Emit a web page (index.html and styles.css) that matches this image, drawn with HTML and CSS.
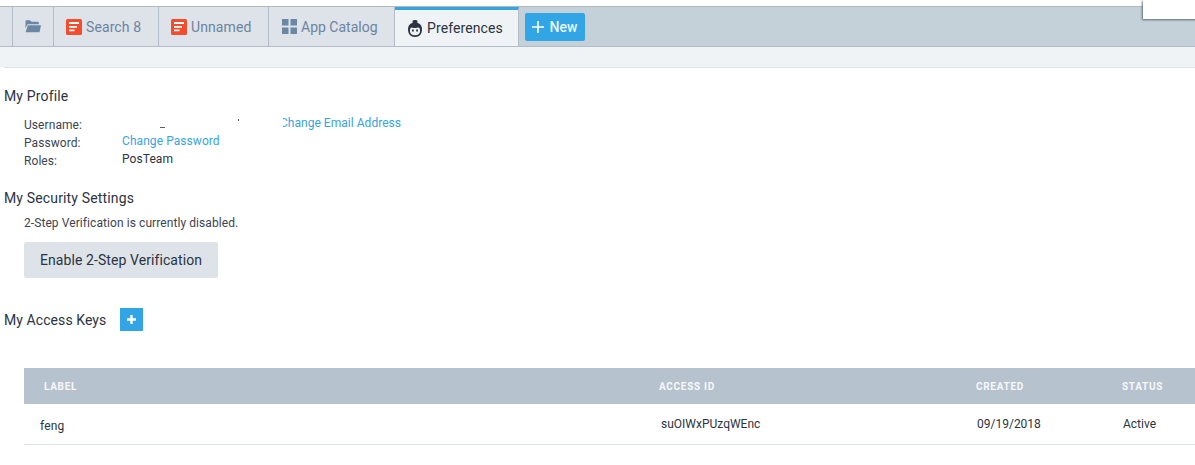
FILE: index.html
```html
<!DOCTYPE html>
<html lang="en">
<head>
<meta charset="utf-8">
<title>Preferences</title>
<link rel="stylesheet" href="styles.css">
</head>
<body>
<div class="popover"></div>
<nav class="tabbar">
  <div class="tab tab-stub"></div>
  <div class="tab tab-folder">
    <svg width="16" height="13" viewBox="0 0 16 13"><path fill="#6b87a3" d="M.5 1.500C.5.800 1 .3 1.700.3h3.300l1.500 1.500h6.300c.6 0 1 .4 1 1v1.400H2.500L.5 8z"/><path fill="#6b87a3" d="M2.800 5.300H16l-1.500 7H.6z"/></svg>
  </div>
  <div class="tab tab-search">
    <svg class="doc" width="16" height="16" viewBox="0 0 16 16"><rect width="16" height="16" rx="1.500" fill="#f44d2e"/><path fill="#fff" d="M3 3h10v2H3zM3 7h8v1.700H3zM3 10.500h5.500v1.700H3z"/></svg>
    <span>Search 8</span>
  </div>
  <div class="tab tab-unnamed">
    <svg class="doc" width="16" height="16" viewBox="0 0 16 16"><rect width="16" height="16" rx="1.500" fill="#f44d2e"/><path fill="#fff" d="M3 3h10v2H3zM3 7h8v1.700H3zM3 10.500h5.500v1.700H3z"/></svg>
    <span>Unnamed</span>
  </div>
  <div class="tab tab-catalog">
    <svg width="15" height="15" viewBox="0 0 15 15"><path fill="#6b87a3" d="M0 0h6.500v6.500H0zM8.500 0H15v6.500H8.500zM0 8.500h6.500V15H0zM8.500 8.500H15V15H8.500z"/></svg>
    <span>App Catalog</span>
  </div>
  <div class="tab tab-active">
    <svg width="14" height="17" viewBox="0 0 14 17"><rect x="4.500" y="0" width="5" height="3.500" rx="1.500" fill="#2b3440"/><path fill="#2b3440" d="M7 2.500c4 0 7 2.600 7 7S11.500 17 7 17 0 14 0 9.500 3 2.500 7 2.500z"/><path fill="#f0f3f5" d="M3.200 7.500c1.500.6 6.100.6 7.600 0 .7.500 1.200 1.200 1.200 2.500v1.500c0 2-2 3.800-5 3.800s-5-1.800-5-3.800V10c0-1.300.500-2 1.200-2.500z"/><rect x="4" y="9.500" width="1.800" height="2" fill="#2b3440"/><rect x="8.200" y="9.500" width="1.800" height="2" fill="#2b3440"/></svg>
    <span>Preferences</span>
  </div>
  <button class="new-btn" type="button">
    <svg width="12" height="12" viewBox="0 0 12 12"><path fill="#fff" d="M5.200 0h1.600v5.200H12v1.600H6.800V12H5.200V6.800H0V5.200h5.200z"/></svg>
    <span>New</span>
  </button>
</nav>
<div class="subbar"></div>
<div class="subbar-line"></div>
<main class="content">
  <h2 class="section-title title-profile">My Profile</h2>
  <div class="profile">
    <div class="profile-row row-user">
      <span class="label">Username:</span>
      <a class="link email-link">Change Email Address</a>
      <span class="redact"><i class="speck speck-a"></i><i class="speck speck-b"></i></span>
    </div>
    <div class="profile-row">
      <span class="label">Password:</span>
      <a class="link">Change Password</a>
    </div>
    <div class="profile-row">
      <span class="label">Roles:</span>
      <span class="value">PosTeam</span>
    </div>
  </div>
  <h2 class="section-title title-security">My Security Settings</h2>
  <p class="note">2-Step Verification is currently disabled.</p>
  <button class="enable-btn" type="button">Enable 2-Step Verification</button>
  <div class="keys-head">
    <h2 class="section-title title-keys">My Access Keys</h2>
    <button class="add-btn" type="button" aria-label="Add">
      <svg width="9" height="9" viewBox="0 0 9 9"><path fill="#fff" d="M3.300 0h2.400v3.300H9v2.400H5.700V9H3.300V5.700H0V3.300h3.300z"/></svg>
    </button>
  </div>
  <div class="keys-table">
    <div class="keys-row keys-header">
      <span class="cell-label">LABEL</span>
      <span class="cell-id">ACCESS ID</span>
      <span class="cell-created">CREATED</span>
      <span class="cell-status">STATUS</span>
    </div>
    <div class="keys-row keys-data">
      <span class="cell-label data-label">feng</span>
      <span class="cell-id data-id">suOIWxPUzqWEnc</span>
      <span class="cell-created data-created">09/19/2018</span>
      <span class="cell-status data-status">Active</span>
    </div>
  </div>
</main>
</body>
</html>
```
FILE: styles.css
```css
* { box-sizing: border-box; }
html, body { margin: 0; padding: 0; }
body {
  width: 1195px;
  height: 465px;
  overflow: hidden;
  background: #fff;
  font-family: Roboto, "Liberation Sans", sans-serif;
  color: #2b3440;
  padding-top: 6px;
  position: relative;
}
.popover {
  position: absolute;
  left: 1143px;
  top: 0;
  width: 60px;
  height: 19px;
  background: #fff;
  z-index: 2;
  box-shadow: -1px 1px 2px rgba(60, 75, 90, .75);
}
.tabbar {
  display: flex;
  align-items: flex-start;
  height: 41px;
  background: #c5d1d9;
  border-top: 1px solid #b4b8bd;
  border-bottom: 1px solid #b3bdc9;
}
.tab {
  height: 39px;
  display: flex;
  align-items: center;
  justify-content: flex-start;
  gap: 4px;
  flex: none;
  background: #dde3e9;
  border-right: 1px solid #b3bdc9;
  font-size: 14px;
  letter-spacing: .1px;
  color: #6b84a0;
  padding-left: 12px;
}
.tab-stub { width: 13px; padding-left: 0; }
.tab-folder { width: 41px; padding-left: 12px; }
.tab-search { width: 105px; }
.tab-unnamed { width: 110px; }
.tab-catalog { width: 126px; padding-left: 13px; gap: 4px; letter-spacing: 0; }
.tab-active {
  width: 124px;
  height: 39px;
  background: #f0f3f5;
  color: #2b3440;
  border-top: 3px solid #32a5e6;
  border-right: 1px solid #b3bdc9;
  padding-left: 13px;
  gap: 5px;
}
.new-btn {
  margin: 6px 0 0 6px;
  width: 60px;
  height: 28px;
  border: 0;
  border-radius: 2px;
  background: #32a5e6;
  color: #eaf6fd;
  font: 500 14px Roboto, "Liberation Sans", sans-serif;
  display: flex;
  align-items: center;
  justify-content: center;
  gap: 6px;
  padding: 0 1px 0 0;
}
.subbar {
  height: 20px;
  background: #f0f3f5;
}
.subbar-line {
  height: 1px;
  margin-left: 4px;
  background: #dde3e9;
}
.content { padding: 20px 0 0 4px; }
.section-title {
  margin: 0;
  font-size: 14px;
  line-height: 16px;
  font-weight: 400;
  letter-spacing: .15px;
  color: #2b3440;
}
.title-keys { letter-spacing: .08px; }
.profile { padding: 10px 0 0 20px; }
.profile-row {
  display: grid;
  grid-template-columns: 98px auto;
  justify-content: start;
  height: 18px;
  font-size: 12px;
  line-height: 18px;
  letter-spacing: .07px;
  position: relative;
}
.label { color: #3b4450; padding-top: 2px; }
.value { color: #2b3440; }
.link { color: #38a3e4; }
.email-link { margin-left: 158px; letter-spacing: .03px; }
.redact {
  position: absolute;
  left: 98px;
  top: 0;
  width: 161px;
  height: 18px;
  background: #fff;
}
.speck { position: absolute; background: #5a6068; height: 1px; }
.speck-a { left: 38px; top: 13px; width: 5px; }
.speck-b { left: 116px; top: 5px; width: 1px; height: 2px; }
.title-security { margin-top: 22px; }
.note {
  margin: 10px 0 0 20px;
  font-size: 12px;
  line-height: 14px;
  letter-spacing: .08px;
  color: #3b4450;
}
.enable-btn {
  display: block;
  margin: 12px 0 0 20px;
  width: 194px;
  height: 36px;
  border: 0;
  border-radius: 2px;
  background: #dde3e9;
  color: #2b3440;
  font: 400 14px Roboto, "Liberation Sans", sans-serif;
  letter-spacing: .08px;
  padding: 0;
}
.keys-head {
  display: flex;
  align-items: center;
  gap: 14px;
  margin-top: 30px;
  height: 23px;
}
.add-btn {
  width: 23px;
  height: 23px;
  border: 0;
  padding: 0;
  background: #32a5e6;
  display: flex;
  align-items: center;
  justify-content: center;
}
.keys-table { margin: 37px 0 0 20px; }
.keys-row {
  display: grid;
  grid-template-columns: 635px 317px 146px 1fr;
  align-items: center;
}
.keys-header {
  height: 36px;
  background: #b6c2cd;
  color: #f6f8fa;
  font-size: 10px;
  font-weight: 700;
  letter-spacing: .7px;
}
.keys-data {
  height: 41px;
  font-size: 12px;
  color: #2b3440;
  border-bottom: 1px solid #dde3e9;
}
.cell-label, .cell-id, .cell-created, .cell-status { white-space: nowrap; }
.keys-header .cell-label { padding-left: 20px; }
.data-label { padding-left: 16px; padding-top: 3px; letter-spacing: .2px; }
.data-id { padding-left: 2px; }
.data-created { padding-left: 1px; }
.data-status { padding-left: 1px; }
```
